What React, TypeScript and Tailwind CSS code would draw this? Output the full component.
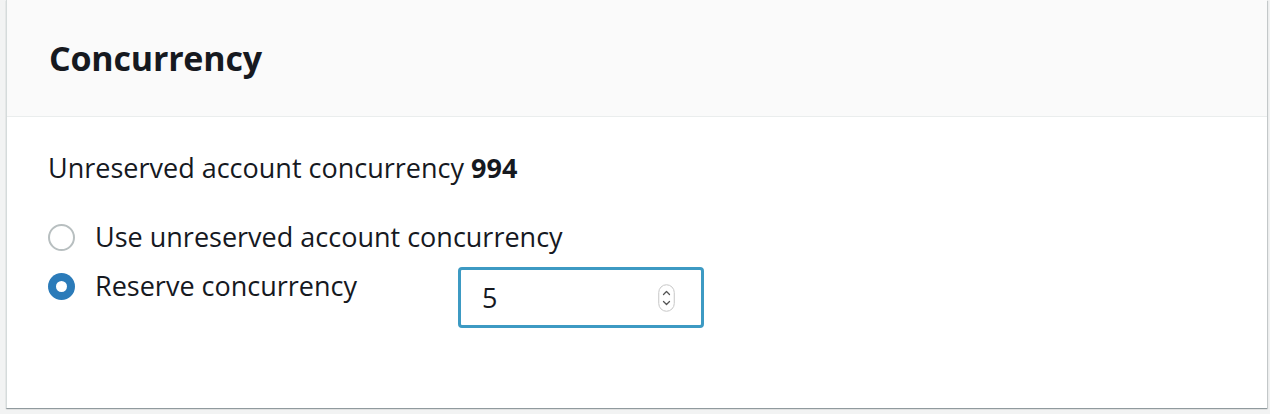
import React, { useState } from 'react'

const font = { fontFamily: '"Open Sans", "Liberation Sans", sans-serif' }

const Radio = ({ checked }: { checked: boolean }) =>
  checked ? (
    <span className="flex h-[27px] w-[27px] shrink-0 items-center justify-center rounded-full bg-[#2b7bb9]">
      <span className="h-[11px] w-[11px] rounded-full bg-white" />
    </span>
  ) : (
    <span className="h-[27px] w-[27px] shrink-0 rounded-full border-2 border-[#b8bfc0] bg-white" />
  )

const Spinner = () => (
  <svg width="17" height="28" viewBox="0 0 17 28" className="shrink-0">
    <rect x="0.75" y="0.75" width="15.5" height="26.5" rx="7.75" fill="#fff" stroke="#c6c6c6" strokeWidth="1" />
    <path d="M5.5 10.5 L8.5 7.5 L11.5 10.5" fill="none" stroke="#555" strokeWidth="1.3" strokeLinecap="round" strokeLinejoin="round" />
    <path d="M5.5 17.5 L8.5 20.5 L11.5 17.5" fill="none" stroke="#555" strokeWidth="1.3" strokeLinecap="round" strokeLinejoin="round" />
  </svg>
)

export default function App() {
  const [mode, setMode] = useState<'unreserved' | 'reserve'>('reserve')

  return (
    <div className="h-[414px] w-[1270px] bg-[#f2f3f3] pb-[6px] pl-[6px] pr-[3px]" style={font}>
      <div className="flex h-full flex-col border-l border-[#d5dbdb] bg-white text-[#16191f] shadow-[0_1px_1px_0_rgba(0,28,36,0.3),1px_1px_1px_0_rgba(0,28,36,0.15)]">
        <div className="flex h-[117px] items-center border-b border-[#eaeded] bg-[#fafafa] pl-[42px]">
          <h2 className="text-[34px] font-bold leading-none tracking-[-0.2px]">Concurrency</h2>
        </div>
        <div className="flex flex-col pl-[41px] pt-[34px]">
          <p className="text-[27px] leading-[34px]">
            Unreserved account concurrency <span className="font-bold">994</span>
          </p>
          <div className="mt-[37px] flex flex-col gap-[12px]">
            <label className="flex items-center gap-[20px]" onClick={() => setMode('unreserved')}>
              <Radio checked={mode === 'unreserved'} />
              <span className="text-[27px] leading-[30px]">Use unreserved account concurrency</span>
            </label>
            <div className="flex items-start">
              <label className="flex w-[410px] items-center gap-[20px] pt-[7px]" onClick={() => setMode('reserve')}>
                <Radio checked={mode === 'reserve'} />
                <span className="text-[27px] leading-[30px]">Reserve concurrency</span>
              </label>
              <div className="mt-[3px] flex h-[61px] w-[246px] items-center justify-between rounded-[4px] border-[3px] border-[#3d9ac3] pl-[21px] pr-[26px]">
                <span className="text-[27px] leading-none">5</span>
                <Spinner />
              </div>
            </div>
          </div>
        </div>
      </div>
    </div>
  )
}
